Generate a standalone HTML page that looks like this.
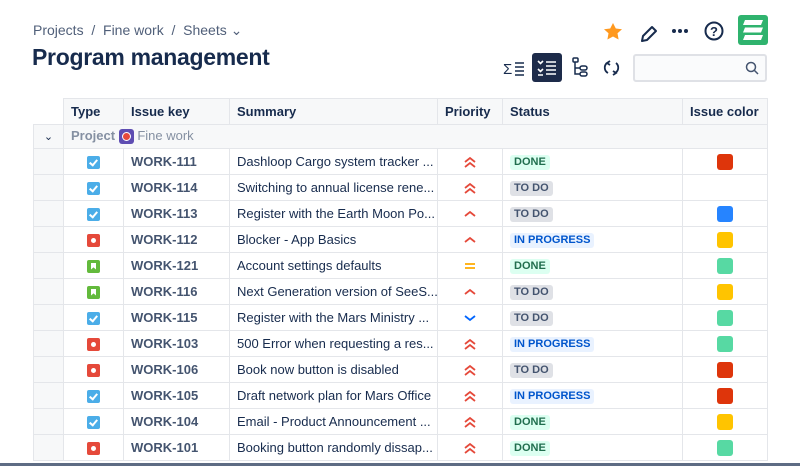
<!DOCTYPE html>
<html><head><style>
*{margin:0;padding:0;box-sizing:border-box}
body{width:800px;height:466px;overflow:hidden;background:#fff;font-family:"Liberation Sans",sans-serif;color:#172b4d;position:relative}
.bc{position:absolute;left:33px;top:22px;font-size:14px;color:#505f79}
h1{position:absolute;left:32px;top:44px;font-size:23px;font-weight:bold;color:#172b4d;letter-spacing:-0.3px}
table{position:absolute;left:33px;top:98px;border-collapse:collapse;font-size:13px;table-layout:fixed;width:734px}
tr{height:26px}
td,th{height:26px;line-height:14px;border:1px solid #e4e6ea;padding:0 7px;text-align:left;white-space:nowrap;overflow:hidden}
th{background:#f7f8f9;font-weight:bold;color:#172b4d}
.k{color:#44546f;font-weight:bold}
.g{background:#f7f8f9}
.lz{display:inline-block;padding:1px 4px;border-radius:3px;font-size:11px;line-height:13px;font-weight:bold}
.d{background:#dcfff1;color:#216e4e}.t{background:#dfe1e6;color:#44546f}.p{background:#e9f2ff;color:#0055cc}
.ic{display:inline-block;width:13px;height:13px;border-radius:2px;vertical-align:middle;position:relative}
.tk{background:#4bade8}.tk:after{content:"";position:absolute;left:4px;top:2px;width:3px;height:6px;border:solid #fff;border-width:0 2px 2px 0;transform:rotate(40deg)}
.bg{background:#e5493a}.bg:after{content:"";position:absolute;left:4px;top:4px;width:5px;height:5px;border-radius:50%;background:#fff}
.st{background:#63ba3c}.st:after{content:"";position:absolute;left:4px;top:3px;width:5px;height:7px;background:#fff;clip-path:polygon(0 0,100% 0,100% 100%,50% 70%,0 100%)}
.sw{display:inline-block;width:16px;height:16px;border-radius:3px;vertical-align:middle}
.c{text-align:center}
svg.pr{vertical-align:middle}
</style></head><body>
<div class="bc">Projects &nbsp;/&nbsp; Fine work &nbsp;/&nbsp; Sheets &#8964;</div>
<h1>Program management</h1>
<svg style="position:absolute;left:600px;top:20px" width="180" height="28">
<polygon points="13,3 15.8,8.5 22,9.2 17.5,13.3 18.6,19.5 13,16.5 7.4,19.5 8.5,13.3 4,9.2 10.2,8.5" fill="#ff991f"/>
<path d="M42 21l1-5 9-9 4 4-9 9z" stroke="#172b4d" stroke-width="2" fill="none" stroke-linejoin="round"/>
<circle cx="74" cy="11" r="2" fill="#172b4d"/><circle cx="80" cy="11" r="2" fill="#172b4d"/><circle cx="86" cy="11" r="2" fill="#172b4d"/>
<circle cx="114" cy="11" r="8.5" stroke="#172b4d" stroke-width="2" fill="none"/>
<text x="114" y="16" font-size="13" font-weight="bold" text-anchor="middle" fill="#172b4d">?</text>
</svg>
<svg style="position:absolute;left:738px;top:15px" width="30" height="30">
<rect x="0" y="0" width="30" height="30" rx="3" fill="#2fb36e"/>
<path d="M7 5h18l-2 5h-18z M7 12.5h18l-2 5h-18z M7 20h18l-2 5h-18z" fill="#fff"/>
</svg>
<svg style="position:absolute;left:500px;top:52px" width="135" height="32">
<text x="3" y="22" font-size="15" fill="#172b4d">Σ</text>
<path d="M15 11h9M15 15h9M15 19h9M15 23h9" stroke="#172b4d" stroke-width="1.5"/>
<rect x="32" y="1" width="30" height="29" rx="3" fill="#1d2b4a"/>
<path d="M38 9l2.5 2.5 2.5-2.5M38 17l2.5 2.5 2.5-2.5M46 10h10M46 14h10M46 18h10M46 22h10M38 23h5" stroke="#fff" stroke-width="1.6" fill="none"/>
<path d="M75 10v12h5M75 16h5" stroke="#172b4d" stroke-width="1.5" fill="none"/><rect x="73" y="6" width="5" height="4" rx="1" stroke="#172b4d" fill="none" stroke-width="1.5"/><rect x="80" y="14" width="7" height="4" rx="2" stroke="#172b4d" fill="none" stroke-width="1.5"/><rect x="80" y="20" width="7" height="4" rx="2" stroke="#172b4d" fill="none" stroke-width="1.5"/>
<path d="M107 11a6 6 0 0 0 1 10M110 9l-3 2 3 2M116 11a6 6 0 0 1 -1 10M113 23l3-2-3-2" stroke="#172b4d" stroke-width="1.8" fill="none"/>
</svg>
<div style="position:absolute;left:633px;top:54px;width:134px;height:28px;border:2px solid #dfe1e6;border-radius:3px;background:#fafbfc"></div>
<svg style="position:absolute;left:745px;top:61px" width="14" height="14"><circle cx="6" cy="6" r="4.5" stroke="#44546f" stroke-width="1.5" fill="none"/><path d="M9.5 9.5l3.5 3.5" stroke="#44546f" stroke-width="1.5"/></svg>
<svg width="0" height="0" style="position:absolute"><defs>
<symbol id="hh" viewBox="0 0 14 14"><path d="M2 7l5-4 5 4M2 12l5-4 5 4" stroke="#e5493a" stroke-width="1.8" fill="none"/></symbol>
<symbol id="h" viewBox="0 0 14 14"><path d="M2 9l5-4 5 4" stroke="#e5493a" stroke-width="1.8" fill="none"/></symbol>
<symbol id="m" viewBox="0 0 14 14"><path d="M2 5h10M2 9h10" stroke="#ffab00" stroke-width="1.8" fill="none"/></symbol>
<symbol id="l" viewBox="0 0 14 14"><path d="M2 5l5 4 5-4" stroke="#0065ff" stroke-width="1.8" fill="none"/></symbol>
</defs></svg>
<table>
<colgroup><col style="width:30px"><col style="width:60px"><col style="width:106px"><col style="width:208px"><col style="width:65px"><col style="width:180px"><col style="width:85px"></colgroup>
<tr><th style="background:#fff;border:none;border-bottom:1px solid #e4e6ea"></th><th>Type</th><th>Issue key</th><th>Summary</th><th>Priority</th><th>Status</th><th>Issue color</th></tr>
<tr style="background:#f7f8f9;height:24px"><td class="c" style="font-size:11px;height:24px">&#8964;</td><td colspan="6" style="color:#8590a2;font-weight:bold;height:24px">Project <span style="display:inline-block;width:15px;height:15px;background:#5e4db2;border-radius:3px;vertical-align:middle;position:relative"><span style="position:absolute;left:3px;top:3px;width:9px;height:9px;border-radius:50%;background:#e5493a;border:1px solid #fff"></span></span> <span style="font-weight:normal">Fine work</span></td></tr>
<tr><td class="g"></td><td class="c"><span class="ic tk"></span></td><td class="k">WORK-111</td><td>Dashloop Cargo system tracker ...</td><td class="c"><svg class="pr" width="14" height="14"><use href="#hh"/></svg></td><td><span class="lz d">DONE</span></td><td class="c"><span class="sw" style="background:#de350b"></span></td></tr>
<tr><td class="g"></td><td class="c"><span class="ic tk"></span></td><td class="k">WORK-114</td><td>Switching to annual license rene...</td><td class="c"><svg class="pr" width="14" height="14"><use href="#hh"/></svg></td><td><span class="lz t">TO DO</span></td><td></td></tr>
<tr><td class="g"></td><td class="c"><span class="ic tk"></span></td><td class="k">WORK-113</td><td>Register with the Earth Moon Po...</td><td class="c"><svg class="pr" width="14" height="14"><use href="#h"/></svg></td><td><span class="lz t">TO DO</span></td><td class="c"><span class="sw" style="background:#2684ff"></span></td></tr>
<tr><td class="g"></td><td class="c"><span class="ic bg"></span></td><td class="k">WORK-112</td><td>Blocker - App Basics</td><td class="c"><svg class="pr" width="14" height="14"><use href="#h"/></svg></td><td><span class="lz p">IN PROGRESS</span></td><td class="c"><span class="sw" style="background:#ffc400"></span></td></tr>
<tr><td class="g"></td><td class="c"><span class="ic st"></span></td><td class="k">WORK-121</td><td>Account settings defaults</td><td class="c"><svg class="pr" width="14" height="14"><use href="#m"/></svg></td><td><span class="lz d">DONE</span></td><td class="c"><span class="sw" style="background:#57d9a3"></span></td></tr>
<tr><td class="g"></td><td class="c"><span class="ic st"></span></td><td class="k">WORK-116</td><td>Next Generation version of SeeS...</td><td class="c"><svg class="pr" width="14" height="14"><use href="#h"/></svg></td><td><span class="lz t">TO DO</span></td><td class="c"><span class="sw" style="background:#ffc400"></span></td></tr>
<tr><td class="g"></td><td class="c"><span class="ic tk"></span></td><td class="k">WORK-115</td><td>Register with the Mars Ministry ...</td><td class="c"><svg class="pr" width="14" height="14"><use href="#l"/></svg></td><td><span class="lz t">TO DO</span></td><td class="c"><span class="sw" style="background:#57d9a3"></span></td></tr>
<tr><td class="g"></td><td class="c"><span class="ic bg"></span></td><td class="k">WORK-103</td><td>500 Error when requesting a res...</td><td class="c"><svg class="pr" width="14" height="14"><use href="#hh"/></svg></td><td><span class="lz p">IN PROGRESS</span></td><td class="c"><span class="sw" style="background:#57d9a3"></span></td></tr>
<tr><td class="g"></td><td class="c"><span class="ic bg"></span></td><td class="k">WORK-106</td><td>Book now button is disabled</td><td class="c"><svg class="pr" width="14" height="14"><use href="#hh"/></svg></td><td><span class="lz t">TO DO</span></td><td class="c"><span class="sw" style="background:#de350b"></span></td></tr>
<tr><td class="g"></td><td class="c"><span class="ic tk"></span></td><td class="k">WORK-105</td><td>Draft network plan for Mars Office</td><td class="c"><svg class="pr" width="14" height="14"><use href="#hh"/></svg></td><td><span class="lz p">IN PROGRESS</span></td><td class="c"><span class="sw" style="background:#de350b"></span></td></tr>
<tr><td class="g"></td><td class="c"><span class="ic tk"></span></td><td class="k">WORK-104</td><td>Email - Product Announcement ...</td><td class="c"><svg class="pr" width="14" height="14"><use href="#hh"/></svg></td><td><span class="lz d">DONE</span></td><td class="c"><span class="sw" style="background:#ffc400"></span></td></tr>
<tr><td class="g"></td><td class="c"><span class="ic bg"></span></td><td class="k">WORK-101</td><td>Booking button randomly dissap...</td><td class="c"><svg class="pr" width="14" height="14"><use href="#hh"/></svg></td><td><span class="lz d">DONE</span></td><td class="c"><span class="sw" style="background:#57d9a3"></span></td></tr>
</table>
<div style="position:absolute;left:0;top:463px;width:800px;height:3px;background:#5e6c84"></div>
</body></html>
